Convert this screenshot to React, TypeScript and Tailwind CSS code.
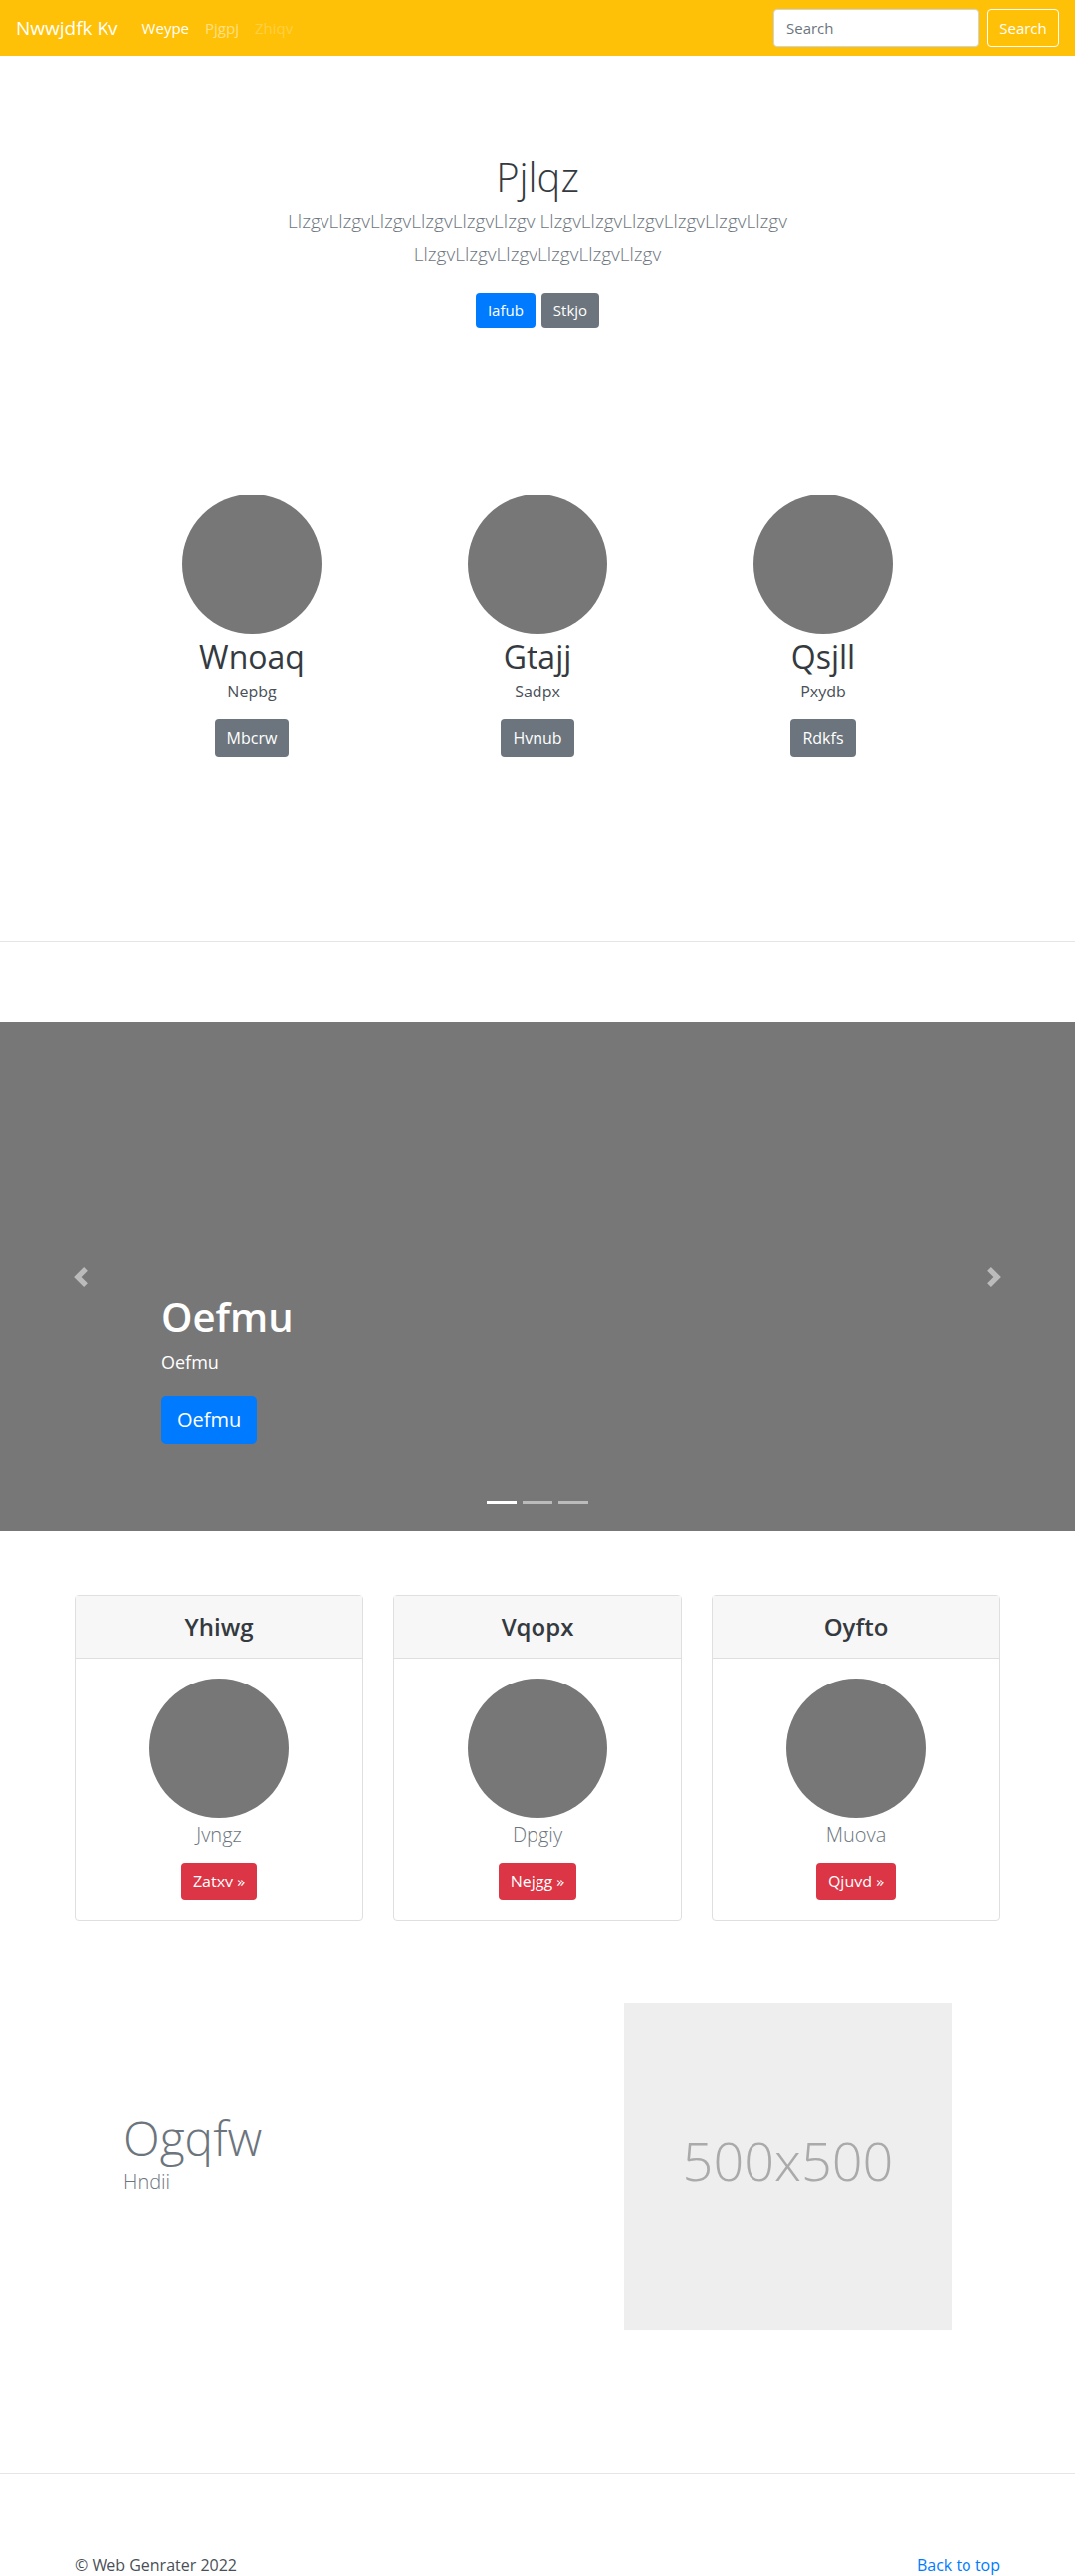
import React from "react";

const circles = [
  { title: "Wnoaq", sub: "Nepbg", btn: "Mbcrw" },
  { title: "Gtajj", sub: "Sadpx", btn: "Hvnub" },
  { title: "Qsjll", sub: "Pxydb", btn: "Rdkfs" },
];

const cards = [
  { head: "Yhiwg", name: "Jvngz", btn: "Zatxv" },
  { head: "Vqopx", name: "Dpgiy", btn: "Nejgg" },
  { head: "Oyfto", name: "Muova", btn: "Qjuvd" },
];

const Chevron: React.FC<{ dir: "left" | "right" }> = ({ dir }) => (
  <svg width="20" height="20" viewBox="0 0 8 8" className="opacity-50">
    {dir === "left" ? (
      <path fill="#fff" d="M5.25 0l-4 4 4 4 1.5-1.5L4.25 4l2.5-2.5L5.25 0z" />
    ) : (
      <path fill="#fff" d="M2.75 0l-1.5 1.5L3.75 4l-2.5 2.5L2.75 8l4-4-4-4z" />
    )}
  </svg>
);

export default function App() {
  const word = "LlzgvLlzgvLlzgvLlzgvLlzgvLlzgv";

  return (
    <div className="min-h-[2589px] bg-white font-['Open_Sans',sans-serif] text-[16px] text-[#212529]">
      {/* Navbar */}
      <nav className="flex h-[56px] items-center bg-[#ffc107] px-4">
        <span className="mr-4 text-[19px] text-white">Nwwjdfk Kv</span>
        <a className="px-2 text-[15px] text-white">Weype</a>
        <a className="px-2 text-[15px] text-white/50">Pjgpj</a>
        <a className="px-2 text-[15px] text-white/25">Zhiqv</a>
        <div className="ml-auto flex items-center">
          <input
            placeholder="Search"
            className="h-[38px] w-[207px] rounded-[4px] border border-[#ced4da] bg-white px-3 text-[15px] text-[#495057] placeholder:text-[#6c757d] outline-none"
          />
          <button className="ml-2 h-[38px] w-[72px] rounded-[4px] border border-white text-[15px] text-white">
            Search
          </button>
        </div>
      </nav>

      {/* Hero */}
      <section className="pt-[98px] text-center">
        <h1 className="text-[40px] font-light leading-[48px] text-[#343a40]">Pjlqz</h1>
        <p className="mx-auto mt-[4px] max-w-[610px] text-[19px] font-light leading-[33px] text-[#6c757d]">
          {word} {word} {word}
        </p>
        <div className="mt-[22px] flex justify-center gap-[6px]">
          <button className="h-[36px] rounded-[4px] bg-[#007bff] px-3 text-[15px] text-white">Iafub</button>
          <button className="h-[36px] rounded-[4px] bg-[#6c757d] px-3 text-[15px] text-white">Stkjo</button>
        </div>
      </section>

      {/* Circles */}
      <section className="mx-auto mt-[167px] grid w-[861px] grid-cols-3">
        {circles.map((c) => (
          <div key={c.title} className="flex flex-col items-center">
            <div className="h-[140px] w-[140px] rounded-full bg-[#777]" />
            <h2 className="mt-[4px] text-[32px] leading-[38px] text-[#343a40]">{c.title}</h2>
            <p className="mt-[4px] leading-[24px] text-[#495057]">{c.sub}</p>
            <button className="mt-[16px] h-[38px] rounded-[4px] bg-[#6c757d] px-3 text-white">{c.btn}</button>
          </div>
        ))}
      </section>

      <hr className="mt-[185px] border-t border-[#e5e5e5]" />

      {/* Carousel */}
      <section className="relative mt-[80px] h-[512px] bg-[#777]">
        <div className="absolute inset-y-0 left-0 flex w-[15%] items-center justify-center">
          <Chevron dir="left" />
        </div>
        <div className="absolute inset-y-0 right-0 flex w-[15%] items-center justify-center">
          <Chevron dir="right" />
        </div>
        <div className="absolute bottom-[88px] left-[15%] text-white">
          <h1 className="text-[40px] font-semibold leading-[48px]">Oefmu</h1>
          <p className="mt-[9px] text-[18px] leading-[24px]">Oefmu</p>
          <button className="mt-[22px] h-[48px] rounded-[5px] bg-[#007bff] px-4 text-[20px] text-white">Oefmu</button>
        </div>
        <div className="absolute bottom-[27px] left-0 right-0 flex justify-center">
          <span className="mx-[3px] h-[3px] w-[30px] bg-white" />
          <span className="mx-[3px] h-[3px] w-[30px] bg-white/50" />
          <span className="mx-[3px] h-[3px] w-[30px] bg-white/50" />
        </div>
      </section>

      {/* Cards */}
      <section className="mx-auto mt-[64px] grid w-[930px] grid-cols-3 gap-[30px]">
        {cards.map((c) => (
          <div key={c.head} className="rounded-[4px] border border-[#dfdfdf]">
            <div className="flex h-[63px] items-center justify-center border-b border-[#dfdfdf] bg-[#f7f7f7]">
              <h4 className="text-[24px] font-semibold text-[#343a40]">{c.head}</h4>
            </div>
            <div className="flex flex-col items-center p-[20px]">
              <div className="h-[140px] w-[140px] rounded-full bg-[#777]" />
              <p className="mt-[2px] text-[20px] font-light leading-[30px] text-[#6c757d]">{c.name}</p>
              <button className="mt-[13px] h-[38px] rounded-[4px] bg-[#dc3545] px-3 text-white">
                {c.btn} &raquo;
              </button>
            </div>
          </div>
        ))}
      </section>

      {/* Featurette */}
      <section className="mx-auto mt-[82px] flex w-[930px] items-center px-[49px]">
        <div className="flex-1 pb-[28px]">
          <h2 className="text-[48px] font-light leading-[58px] text-[#6c757d]">Ogqfw</h2>
          <p className="text-[20px] font-light leading-[30px] text-[#6c757d]">Hndii</p>
        </div>
        <div className="flex h-[329px] w-[329px] items-center justify-center bg-[#eee] pb-[12px]">
          <span className="text-[54px] font-light text-[#aaa]">500x500</span>
        </div>
      </section>

      <hr className="mt-[143px] border-t border-[#e5e5e5]" />

      {/* Footer */}
      <footer className="mx-auto flex w-[930px] justify-between pt-[80px] leading-[24px]">
        <p className="text-[#495057]">© Web Genrater 2022</p>
        <a className="text-[#007bff]">Back to top</a>
      </footer>
    </div>
  );
}
